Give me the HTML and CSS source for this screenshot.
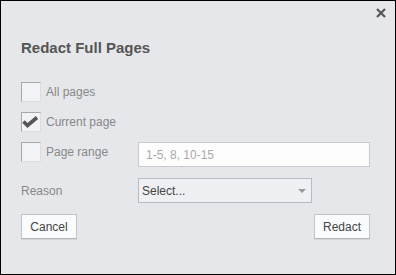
FILE: index.html
```html
<!DOCTYPE html>
<html>
<head>
<title>Redact Full Pages</title>
<link rel="stylesheet" href="styles.css">
</head>
<body>

<div class="dialog">
	<button class="close" title="Close">
		<svg width="10" height="10" viewBox="0 0 10 10"><path d="M1 1 L9 9 M9 1 L1 9" stroke="#555" stroke-width="2.2" fill="none"/></svg>
	</button>

	<h1 class="title">Redact Full Pages</h1>

	<div class="options">
		<div class="row">
			<span class="check"></span>
			<label>All pages</label>
		</div>
		<div class="row">
			<span class="check">
				<svg width="20" height="20" viewBox="0 0 20 20"><polyline points="2.5,9.5 6.5,13.5 16,5.5" stroke="#555" stroke-width="3.6" fill="none"/></svg>
			</span>
			<label>Current page</label>
		</div>
		<div class="row range">
			<div class="rangelabel">
				<span class="check"></span>
				<label>Page range</label>
			</div>
			<input class="pages" type="text" placeholder="1-5, 8, 10-15">
		</div>
	</div>

	<div class="reason">
		<label>Reason</label>
		<div class="select">
			<span>Select...</span>
			<span class="arrow"></span>
		</div>
	</div>

	<div class="actions">
		<button class="btn">Cancel</button>
		<button class="btn">Redact</button>
	</div>
</div>

</body>
</html>
```

FILE: styles.css
```css
body {
	margin: 0;
	font-family: "Liberation Sans", Arial, sans-serif;
	font-size: 12px;
}

.dialog {
	position: relative;
	width: 396px;
	height: 275px;
	box-sizing: border-box;
	border: 1px solid #000;
	background-color: #e6e7eb;
	padding: 38px 25px 0 20px;
}

.close {
	position: absolute;
	top: 5px;
	right: 7px;
	width: 14px;
	height: 14px;
	padding: 2px;
	border: 0;
	background: transparent;
	display: flex;
}

.title {
	margin: 0 0 25px 0;
	font-size: 15px;
	line-height: 18px;
	font-weight: bold;
	color: #555;
}

.options {
	display: flex;
	flex-direction: column;
	gap: 10px;
}

.row {
	display: flex;
	align-items: center;
}

.row label, .reason label {
	color: #888;
}

.row.range {
	align-items: flex-start;
}

.rangelabel {
	display: flex;
	align-items: center;
	width: 117px;
	height: 20px;
}

.check {
	display: block;
	width: 20px;
	height: 20px;
	box-sizing: border-box;
	margin-right: 5px;
	border: 1px solid #dcdde1;
	border-top-color: #a8a9ad;
	border-left-color: #a8a9ad;
	background-color: #f2f3f7;
}

.check svg {
	display: block;
	margin: -1px;
}

.pages {
	width: 232px;
	height: 25px;
	box-sizing: border-box;
	margin: 0;
	padding: 0 7px;
	border: 1px solid #c9cacf;
	background-color: #fdfdfe;
	font-family: inherit;
	font-size: 12px;
	color: #444;
	outline: none;
}

.pages::placeholder {
	color: #aaa;
}

.reason {
	display: flex;
	align-items: center;
	margin-top: 11px;
}

.reason label {
	width: 117px;
}

.select {
	display: flex;
	align-items: center;
	justify-content: space-between;
	width: 174px;
	height: 25px;
	box-sizing: border-box;
	padding: 0 5px 0 3px;
	border: 1px solid #babbc0;
	background-color: #eff0f4;
	color: #444;
}

.arrow {
	width: 0;
	height: 0;
	border-left: 4px solid transparent;
	border-right: 4px solid transparent;
	border-top: 4px solid #999;
}

.actions {
	display: flex;
	justify-content: space-between;
	margin-top: 11px;
}

.btn {
	width: 56px;
	height: 25px;
	box-sizing: border-box;
	padding: 0;
	border: 1px solid #c3c4c9;
	border-bottom-color: #b4b5ba;
	background-color: #fafbfd;
	font-family: inherit;
	font-size: 12px;
	color: #444;
	box-shadow: 0 1px 0 #d4d5d9;
}
```
